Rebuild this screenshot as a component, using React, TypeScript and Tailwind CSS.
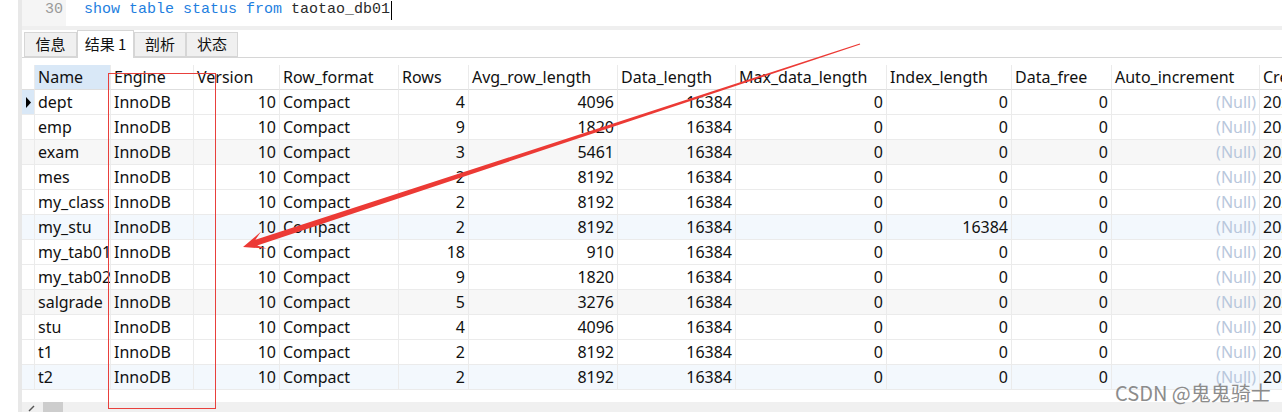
const cols = [
  { name: "", align: "left" },
  { name: "Name", align: "left" },
  { name: "Engine", align: "left" },
  { name: "Version", align: "right" },
  { name: "Row_format", align: "left" },
  { name: "Rows", align: "right" },
  { name: "Avg_row_length", align: "right" },
  { name: "Data_length", align: "right" },
  { name: "Max_data_length", align: "right" },
  { name: "Index_length", align: "right" },
  { name: "Data_free", align: "right" },
  { name: "Auto_increment", align: "right" },
  { name: "Create_time", align: "left" },
];

const rows = [
  ["dept", "4", "4096", "0"],
  ["emp", "9", "1820", "0"],
  ["exam", "3", "5461", "0"],
  ["mes", "2", "8192", "0"],
  ["my_class", "2", "8192", "0"],
  ["my_stu", "2", "8192", "16384"],
  ["my_tab01", "18", "910", "0"],
  ["my_tab02", "9", "1820", "0"],
  ["salgrade", "5", "3276", "0"],
  ["stu", "4", "4096", "0"],
  ["t1", "2", "8192", "0"],
  ["t2", "2", "8192", "0"],
];

const rowBg = ["bg-white", "bg-white", "bg-[#f7f7f7]", "bg-white", "bg-white", "bg-[#f3f8fd]", "bg-white", "bg-white", "bg-[#f7f7f7]", "bg-white", "bg-white", "bg-[#f3f8fd]"];

const gridCols =
  "grid grid-cols-[13px_76px_83px_86px_119px_70px_149px_118px_151px_125px_100px_148px_200px]";

function Cell({ children, align, className = "" }: { children?: React.ReactNode; align: string; className?: string }) {
  return (
    <div
      className={`h-[25px] overflow-hidden whitespace-nowrap border-r border-b border-[#ebebeb] px-[3px] leading-[24px] ${
        align === "right" ? "text-right" : "text-left"
      } ${className}`}
    >
      {children}
    </div>
  );
}

function Tab({ label, active }: { label: string; active?: boolean }) {
  if (active) {
    return (
      <div className="relative -mb-px flex h-[28px] w-[57px] items-center justify-center border border-b-0 border-[#d6d6d6] bg-white text-[15px] text-[#111]">
        {label}
      </div>
    );
  }
  return (
    <div className="flex h-[25px] w-[52px] items-center justify-center border border-[#d6d6d6] bg-[#f0f0f0] text-[15px] text-[#111]">
      {label}
    </div>
  );
}

export default function App() {
  return (
    <div className="relative h-[412px] w-[1282px] overflow-hidden bg-white font-['Noto_Sans','Noto_Sans_CJK_SC',sans-serif] text-[16px] text-[#111]">
      <div className="flex h-full">
        <div className="w-[18px] bg-white" />
        <div className="w-[4px] bg-[#e8e8e8]" />

        <div className="flex min-w-0 flex-1 flex-col">
          {/* Editor */}
          <div className="flex h-[26px] font-['Liberation_Mono',monospace] text-[15px] leading-[20px]">
            <div className="w-[44px] bg-[#f5f5f5] pr-[3px] text-right text-[#9a9a9a]">30</div>
            <div className="flex pl-[18px]">
              <span className="text-[#1f7fe0]">show table status from</span>
              <span className="text-[#2b2b2b]">&nbsp;taotao_db01</span>
              <span className="ml-px mt-[1px] h-[19px] w-px bg-black" />
            </div>
          </div>
          <div className="h-[4px] bg-[#efefef]" />

          {/* Tabs */}
          <div className="flex h-[28px] items-end gap-0 border-b border-[#d6d6d6] pl-[2px] font-['Noto_Sans_CJK_SC',sans-serif]">
            <div className="flex h-[25px] w-[53px] items-center justify-center border border-[#d6d6d6] bg-[#f0f0f0] text-[15px]">
              信息
            </div>
            <Tab label="结果 1" active />
            <Tab label="剖析" />
            <Tab label="状态" />
          </div>
          <div className="h-[7px]" />

          {/* Grid */}
          <div className="overflow-hidden">
            <div className={`${gridCols} w-max`}>
              {cols.map((c, i) => (
                <Cell
                  key={c.name + i}
                  align="left"
                  className={`border-b-[#dedede] ${i === 1 ? "bg-[#d9e8f7]" : "bg-white"}`}
                >
                  {c.name}
                </Cell>
              ))}
            </div>
            {rows.map((r, ri) => (
              <div key={r[0]} className={`${gridCols} w-max ${rowBg[ri]}`}>
                <Cell align="left" className={`!px-0 ${ri === 0 ? "bg-[#d9e8f7]" : ""}`}>
                  {ri === 0 && (
                    <svg width="13" height="25" viewBox="0 0 13 25">
                      <path d="M4 7 L9 12.5 L4 18 Z" fill="#000" />
                    </svg>
                  )}
                </Cell>
                <Cell align="left">{r[0]}</Cell>
                <Cell align="left">InnoDB</Cell>
                <Cell align="right">10</Cell>
                <Cell align="left">Compact</Cell>
                <Cell align="right">{r[1]}</Cell>
                <Cell align="right">{r[2]}</Cell>
                <Cell align="right">16384</Cell>
                <Cell align="right">0</Cell>
                <Cell align="right">{r[3]}</Cell>
                <Cell align="right">0</Cell>
                <Cell align="right" className="text-[#b8c7dc]">
                  (Null)
                </Cell>
                <Cell align="left">2021-10-12 10:30:21</Cell>
              </div>
            ))}
          </div>
          <div className="flex-1" />

          {/* Bottom scroll bar */}
          <div className="flex h-[10px] items-center bg-[#f0f0f0]">
            <svg width="21" height="10" viewBox="0 0 21 10" className="shrink-0">
              <path d="M7 9 L12 4" stroke="#555" strokeWidth="1.5" />
            </svg>
            <div className="h-full w-[20px] bg-[#cdcdcd]" />
          </div>
        </div>
      </div>

      {/* Annotations */}
      <div className="pointer-events-none absolute left-[108px] top-[73px] h-[336px] w-[108px] border-[1.5px] border-[#e8403c]" />
      <svg className="pointer-events-none absolute left-0 top-0" width="1282" height="412" viewBox="0 0 1282 412">
        <polygon
          points="860.2,44.5 257.2,245.4 266.7,248.6 243,247 261.1,231.6 255.4,239.8 859.8,43.5"
          fill="#ec3a35"
        />
      </svg>
      <div className="pointer-events-none absolute left-[1115px] top-[378px] font-['Noto_Sans_CJK_SC',sans-serif] text-[20px] text-[#8c8c8c]">
        CSDN @鬼鬼骑士
      </div>
    </div>
  );
}
